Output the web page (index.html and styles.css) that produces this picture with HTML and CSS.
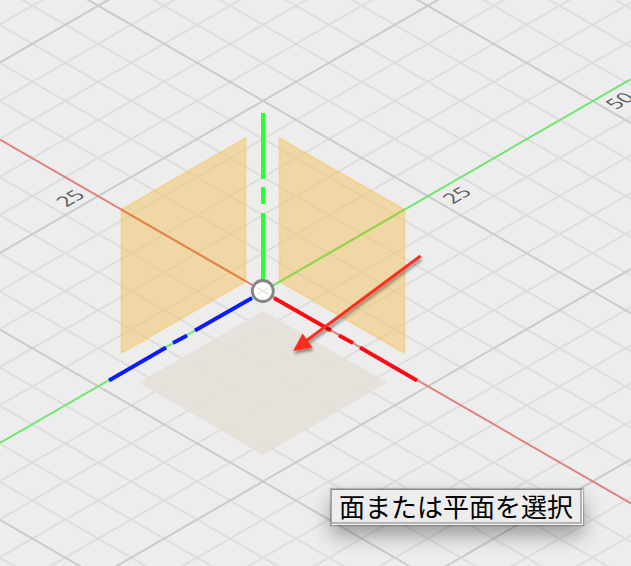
FILE: index.html
```html
<!DOCTYPE html>
<html lang="ja">
<head>
<meta charset="utf-8">
<title>面または平面を選択</title>
<link rel="stylesheet" href="styles.css">
</head>
<body>
<main class="viewport">
  <svg class="scene" viewBox="0 0 631 566" width="631" height="566">
    <defs>
      <filter id="arrow-shadow" x="-20%" y="-20%" width="140%" height="150%">
        <feDropShadow dx="1" dy="3" stdDeviation="1.5" flood-color="#000" flood-opacity=".4"/>
      </filter>
      <path id="minor" d="M-20-14H20M-20-13H20M-20-12H20M-20-11H20M-20-9H20M-20-8H20M-20-7H20M-20-6H20M-20-4H20M-20-3H20M-20-2H20M-20-1H20M-20 1H20M-20 2H20M-20 3H20M-20 4H20M-20 6H20M-20 7H20M-20 8H20M-20 9H20M-20 11H20M-20 12H20M-20 13H20M-20 14H20"/>
      <path id="major" d="M-20-10H20M-20-5H20M-20 5H20M-20 10H20"/>
    </defs>

    <!-- ground grid, one unit per cell, origin at the sketch origin -->
    <g class="grid" transform="matrix(32.95 19.03 32.95 -19.03 263 291.2)">
      <use href="#minor" class="minor"/>
      <use href="#minor" class="minor" transform="matrix(0 1 1 0 0 0)"/>
      <use href="#major" class="major"/>
      <use href="#major" class="major" transform="matrix(0 1 1 0 0 0)"/>
    </g>
    <path class="axis-x" d="M0 139.5L631 503.5"/>
    <path class="axis-y" d="M0 443L631 79"/>

    <g class="label">
      <text transform="matrix(.866 -.5 .866 .5 66.5 207.5)">25</text>
      <text transform="matrix(.866 -.5 .866 .5 453 204.500)">25</text>
      <text transform="matrix(.866 -.5 .866 .5 616 110)">50</text>
    </g>

    <path class="plane" d="M121.500 209.500L245.500 138V281.500L121.500 353Z"/>
    <path class="plane" d="M279.500 138L404.500 209.500V353L279.500 281.500Z"/>
    <path class="axis-x-tinted" d="M121 209.300L246 281.400"/>
    <path class="axis-y-tinted" d="M279 282L405 209.400"/>
    <path class="plane-ground" d="M263 311L387 382.500L263 455L139 382.500Z"/>

    <path class="handle-z" d="M263 113V179M263 187V204M263 213V282"/>
    <path class="handle-y" d="M252 298L195 330.500M187 335.500L173 343M166 347.500L109 380.500"/>
    <path class="handle-x" d="M274 298L331 330.500M339 335.500L353 343M360 347.500L417 380.500"/>
    <circle class="origin" cx="262.800" cy="291" r="10.500"/>
    <path class="origin-mark" d="M258 288L268 294"/>
    <path class="origin-mark-y" d="M258 294L268 288"/>

    <g filter="url(#arrow-shadow)">
      <path class="arrow-line" d="M420.500 256L304 342.500"/>
      <path class="arrow-head" d="M293 351L302.500 333.500L312.500 347.500Z"/>
    </g>
  </svg>
  <div class="tooltip">面または平面を選択</div>
</main>
</body>
</html>
```
FILE: styles.css
```css
body {
  margin: 0;
  background: #ededed;
}

.viewport {
  position: relative;
  width: 631px;
  height: 566px;
  overflow: hidden;
}

.scene {
  display: block;
}

.grid use {
  fill: none;
}

#minor,
#major {
  vector-effect: non-scaling-stroke;
}

.grid .minor {
  stroke: #dedede;
  stroke-width: 2px;
}

.grid .major {
  stroke: #cbcbcb;
  stroke-width: 2px;
}

.axis-x,
.axis-y,
.axis-x-tinted,
.axis-y-tinted {
  stroke-width: 2;
}

.axis-x {
  stroke: #df8282;
}

.axis-y {
  stroke: #70e670;
}

.axis-x-tinted {
  stroke: #e5824a;
}

.axis-y-tinted {
  stroke: #93d44b;
}

.label {
  font: 400 20px "Open Sans", "Noto Sans", sans-serif;
  fill: #5c5c5c;
}

.plane {
  fill: rgba(243, 193, 95, .5);
  stroke: rgba(250, 190, 85, .4);
  stroke-width: 2;
}

.plane-ground {
  fill: rgba(229, 224, 217, .92);
}

.handle-x,
.handle-y {
  stroke-width: 3.8;
}

.handle-z {
  stroke: #2cff32;
  stroke-width: 4;
  shape-rendering: crispEdges;
}

.handle-y {
  stroke: #0a1cff;
}

.handle-x {
  stroke: #ff0a14;
}

.origin {
  fill: rgba(255, 255, 255, .93);
  stroke: #858585;
  stroke-width: 2.8;
}

.origin-mark {
  stroke: #f6c9c9;
}

.origin-mark-y {
  stroke: #c6f2c6;
}

.arrow-line {
  stroke: #ff2d1c;
  stroke-width: 3;
}

.arrow-head {
  fill: #ff2d1c;
}

.tooltip {
  position: absolute;
  left: 331px;
  top: 489px;
  box-sizing: border-box;
  width: 252px;
  height: 36px;
  padding-left: 7px;
  border: 1px solid;
  border-color: #8c8c8c #f7f7f7 #f7f7f7 #a5a5a5;
  background: #ededed;
  box-shadow: inset -2px -2px #b4b4b4, 0 0 1px 1px rgba(0, 0, 0, .22), 0 10px 20px rgba(0, 0, 0, .36);
  color: #000;
  font: 26px/32px "Noto Sans CJK JP", sans-serif;
  white-space: nowrap;
}
```
